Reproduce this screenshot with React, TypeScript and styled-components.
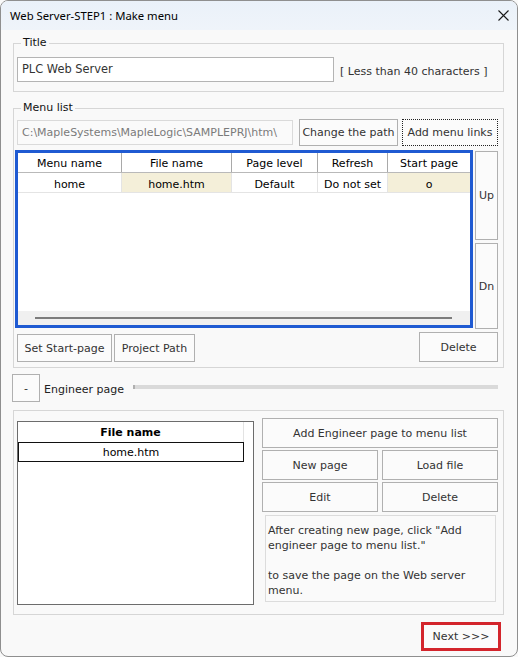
import React from "react";
import styled, { createGlobalStyle } from "styled-components";

const GlobalStyle = createGlobalStyle`
  html, body {
    margin: 0;
    padding: 0;
    background: #f9f9f9;
  }
  * {
    box-sizing: border-box;
  }
`;

const menuColumns = [
  { title: "Menu name", width: 104 },
  { title: "File name", width: 110 },
  { title: "Page level", width: 86 },
  { title: "Refresh", width: 70 },
  { title: "Start page", width: 82 },
];

const menuRows = [
  [
    { text: "home" },
    { text: "home.htm", mark: true },
    { text: "Default" },
    { text: "Do not set" },
    { text: "o", mark: true },
  ],
];

const App: React.FC = () => {
  return (
    <>
      <GlobalStyle />
      <Window>
        <TitleBar>
          <span>Web Server-STEP1 : Make menu</span>
          <CloseIcon width="11" height="11" viewBox="0 0 11 11">
            <path d="M0.5 0.5 L10.5 10.5 M10.5 0.5 L0.5 10.5" />
          </CloseIcon>
        </TitleBar>

        <Body>
          <Group $pad="7px 5px 9px 3px">
            <Legend>Title</Legend>
            <TitleRow>
              <TitleInput value="PLC Web Server" readOnly />
              <Hint>[ Less than 40 characters ]</Hint>
            </TitleRow>
          </Group>

          <Group $pad="4px 5px 5px 3px" $top={9}>
            <Legend>Menu list</Legend>
            <PathRow>
              <PathInput value="C:\MapleSystems\MapleLogic\SAMPLEPRJ\htm\" readOnly />
              <Button $w={99} $h={27}>Change the path</Button>
              <Button $w={96} $h={27} $focus>Add menu links</Button>
            </PathRow>

            <GridRow>
              <GridFrame>
                <HeaderRow>
                  {menuColumns.map((c) => (
                    <HeadCell key={c.title} $w={c.width}>
                      {c.title}
                    </HeadCell>
                  ))}
                </HeaderRow>
                {menuRows.map((row, i) => (
                  <DataRow key={i}>
                    {row.map((cell, j) => (
                      <DataCell key={j} $w={menuColumns[j].width} $mark={!!cell.mark}>
                        {cell.text}
                      </DataCell>
                    ))}
                  </DataRow>
                ))}
                <GridFill />
                <HScroll>
                  <HThumb />
                </HScroll>
              </GridFrame>
              <MoveColumn>
                <Button $w={23} $h={89}>Up</Button>
                <Button $w={23} $h={86}>Dn</Button>
              </MoveColumn>
            </GridRow>

            <ActionRow>
              <Button $w={95} $h={28}>Set Start-page</Button>
              <Button $w={81} $h={28}>Project Path</Button>
              <Spacer />
              <Button $w={79} $h={30}>Delete</Button>
            </ActionRow>
          </Group>

          <EngineerHeader>
            <Button $w={28} $h={28}>-</Button>
            <EngineerLabel>Engineer page</EngineerLabel>
            <Rule />
          </EngineerHeader>

          <Group $pad="7px 5px 9px 3px" $top={8}>
            <EngineerBody>
              <FileList>
                <FileHead>File name</FileHead>
                <FileItem>home.htm</FileItem>
              </FileList>
              <EngineerActions>
                <Button $h={30}>Add Engineer page to menu list</Button>
                <PairRow>
                  <Button $h={30}>New page</Button>
                  <Button $h={30}>Load file</Button>
                </PairRow>
                <PairRow>
                  <Button $h={30}>Edit</Button>
                  <Button $h={30}>Delete</Button>
                </PairRow>
                <InfoBox>
                  <p>After creating new page, click "Add engineer page to menu list."</p>
                  <p>to save the page on the Web server menu.</p>
                </InfoBox>
              </EngineerActions>
            </EngineerBody>
          </Group>

          <Footer>
            <NextButton>Next &gt;&gt;&gt;</NextButton>
          </Footer>
        </Body>
      </Window>
    </>
  );
};

const Window = styled.div`
  width: 518px;
  height: 657px;
  border: 1px solid #8f8f8f;
  border-radius: 8px;
  background: #f9f9f9;
  overflow: hidden;
  display: flex;
  flex-direction: column;
  font-family: "DejaVu Sans", Verdana, sans-serif;
  font-size: 11px;
  color: #1a1a1a;
`;

const TitleBar = styled.div`
  height: 29px;
  flex: none;
  display: flex;
  align-items: center;
  justify-content: space-between;
  padding: 0 8px 0 9px;
  background: linear-gradient(#eaf1f9, #eff4fa);
  font-family: "Noto Sans", "Open Sans", sans-serif;
  font-size: 11.3px;
  color: #000;
`;

const CloseIcon = styled.svg`
  fill: none;
  stroke: #1a1a1a;
  stroke-width: 1.1;
`;

const Body = styled.div`
  flex: 1;
  display: flex;
  flex-direction: column;
  padding: 6px 13px 0 12px;
`;

const Group = styled.fieldset<{ $pad: string; $top?: number }>`
  margin: ${(p) => p.$top ?? 0}px 0 0;
  min-width: 0;
  border: 1px solid #d6d6d6;
  padding: ${(p) => p.$pad};
`;

const Legend = styled.legend`
  margin-left: 4px;
  padding: 0 2px;
  font-size: 11px;
  line-height: 14px;
  color: #111;
`;

const TitleRow = styled.div`
  display: flex;
  align-items: center;
`;

const TitleInput = styled.input`
  width: 317px;
  height: 25px;
  border: 1px solid #b4b4b4;
  background: #fff;
  padding: 0 4px 2px;
  font: inherit;
  font-size: 11.4px;
  color: #333;
  outline: none;
`;

const Hint = styled.span`
  margin-left: 6px;
  padding-top: 3px;
  color: #333;
  white-space: nowrap;
`;

const PathRow = styled.div`
  display: flex;
  align-items: center;
  gap: 6px;
  height: 27px;

  & > button:last-child {
    margin-left: -2px;
  }
`;

const PathInput = styled.input`
  width: 276px;
  height: 25px;
  border: 1px solid #dadada;
  background: #fafafa;
  padding: 0 4px;
  font: inherit;
  color: #7a7a7a;
  outline: none;
`;

const Button = styled.button<{ $w?: number; $h: number; $focus?: boolean }>`
  flex: none;
  width: ${(p) => (p.$w ? `${p.$w}px` : "100%")};
  height: ${(p) => p.$h}px;
  display: flex;
  align-items: center;
  justify-content: center;
  padding: 0;
  overflow: hidden;
  white-space: nowrap;
  border: 1px ${(p) => (p.$focus ? "dotted #222" : "solid #b0b0b0")};
  background: #fbfbfb;
  font: inherit;
  color: #333;
`;

const GridRow = styled.div`
  display: flex;
  align-items: flex-start;
  gap: 2px;
  margin: 4px 0 0 -2px;
`;

const GridFrame = styled.div`
  width: 458px;
  height: 178px;
  border: 3px solid #1f5ad2;
  background: #fff;
  display: flex;
  flex-direction: column;
`;

const HeaderRow = styled.div`
  display: flex;
  height: 20px;
  border-bottom: 1px solid #b9b9b9;
`;

const HeadCell = styled.div<{ $w: number }>`
  width: ${(p) => p.$w}px;
  display: flex;
  align-items: center;
  justify-content: center;
  padding-top: 2px;
  border-right: 1px solid #a9a9a9;
  color: #000;

  &:last-child {
    border-right: none;
  }
`;

const DataRow = styled.div`
  display: flex;
  height: 20px;
  border-bottom: 1px solid #e4e4e4;
`;

const DataCell = styled.div<{ $w: number; $mark: boolean }>`
  width: ${(p) => p.$w}px;
  display: flex;
  align-items: center;
  justify-content: center;
  padding-top: 3px;
  border-right: 1px solid #e4e4e4;
  background: ${(p) => (p.$mark ? "#f4efd9" : "#fff")};
  color: #000;

  &:last-child {
    border-right: none;
  }
`;

const GridFill = styled.div`
  flex: 1;
`;

const HScroll = styled.div`
  height: 14px;
  background: #f0f0f0;
  padding: 6px 18px 0 17px;
`;

const HThumb = styled.div`
  height: 2px;
  background: #7c7c7c;
`;

const MoveColumn = styled.div`
  display: flex;
  flex-direction: column;
  gap: 3px;
  margin-top: 1px;
`;

const ActionRow = styled.div`
  display: flex;
  align-items: flex-end;
  gap: 2px;
  margin-top: 3px;
`;

const Spacer = styled.div`
  flex: 1;
`;

const EngineerHeader = styled.div`
  display: flex;
  align-items: center;
  height: 28px;
  margin: 6px 6px 0 -1px;
`;

const EngineerLabel = styled.span`
  margin-left: 4px;
  padding-top: 2px;
  color: #222;
`;

const Rule = styled.div`
  flex: 1;
  height: 4px;
  margin: 0 0 2px 9px;
  background: #dadada;
  border-left: 2px solid #b0b0b0;
`;

const EngineerBody = styled.div`
  display: flex;
  gap: 8px;
  align-items: flex-start;
`;

const FileList = styled.div`
  width: 237px;
  height: 184px;
  margin-top: 3px;
  border: 1px solid #6c6c6c;
  background: #fff;
`;

const FileHead = styled.div`
  width: 226px;
  height: 20px;
  display: flex;
  align-items: center;
  justify-content: center;
  border-right: 1px solid #e3e3e3;
  font-weight: bold;
  color: #000;
`;

const FileItem = styled.div`
  width: 226px;
  height: 20px;
  display: flex;
  align-items: center;
  justify-content: center;
  border: 1px solid #111;
  color: #000;
`;

const EngineerActions = styled.div`
  flex: 1;
  display: flex;
  flex-direction: column;
  gap: 2px;
`;

const PairRow = styled.div`
  display: grid;
  grid-template-columns: 1fr 1fr;
  gap: 4px;
`;

const InfoBox = styled.div`
  height: 87px;
  margin: 1px 2px 0 3px;
  padding: 7px 2px;
  border: 1px solid #dcdcdc;
  background: #fafafa;
  color: #333;
  line-height: 15px;

  p {
    margin: 0 0 15px;
  }
`;

const Footer = styled.div`
  display: flex;
  justify-content: flex-end;
  margin: 7px 3px 0 0;
`;

const NextButton = styled.button`
  width: 80px;
  height: 29px;
  border: 3px solid #d3252c;
  background: #fbfbfb;
  font: inherit;
  color: #333;
  padding: 0;
`;

export default App;
